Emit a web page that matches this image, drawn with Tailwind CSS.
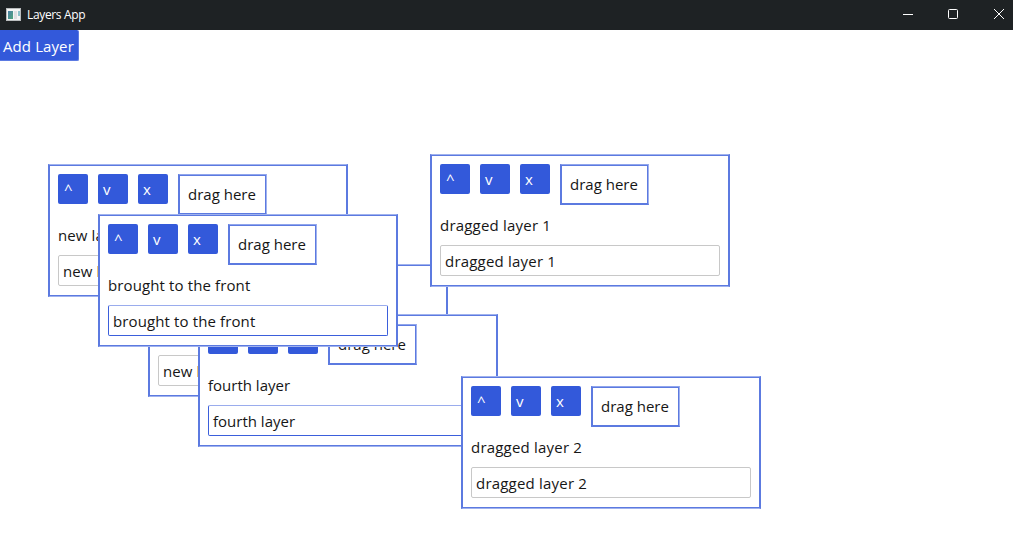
<!DOCTYPE html>
<html lang="en">
<head>
<meta charset="utf-8">
<title>Layers App</title>
<script src="https://cdn.jsdelivr.net/npm/@tailwindcss/browser@4"></script>
</head>
<body class="w-[1013px] h-[544px] overflow-hidden bg-white text-[#161616] font-['Open_Sans',sans-serif] flex flex-col">
<header class="h-[30px] shrink-0 bg-[#1e2224] flex items-center text-white">
  <svg class="ml-[6px] -mt-[2px]" width="15" height="13" viewBox="0 0 15 13">
    <defs><linearGradient id="g" x1="0" y1="0" x2="1" y2="1"><stop offset="0" stop-color="#4a7fa8"/><stop offset="1" stop-color="#4fa57a"/></linearGradient></defs>
    <rect width="15" height="13" fill="#b9bcbe"/>
    <rect x="1" y="1" width="13" height="11" fill="#f4f5f5"/>
    <rect x="2" y="3" width="5" height="8" fill="url(#g)"/>
    <rect x="8" y="3" width="3" height="8" fill="#dde0e2"/>
    <rect x="12" y="3" width="2" height="5" fill="#8dc3cb"/>
  </svg>
  <span class="ml-[6px] text-[12px] tracking-[-0.35px] leading-[30px]">Layers App</span>
  <div class="ml-auto flex items-center gap-[35px] mr-[8px] -mt-[2px]">
    <svg width="10" height="10" viewBox="0 0 10 10"><path d="M0 5.5H10" stroke="#fff"/></svg>
    <svg width="10" height="10" viewBox="0 0 10 10" fill="none" stroke="#fff"><rect x=".5" y=".5" width="9" height="9" rx="1"/></svg>
    <svg class="ml-px mr-px" width="10" height="10" viewBox="0 0 10 10" stroke="#fff"><path d="M0 0L10 10M10 0L0 10"/></svg>
  </div>
</header>
<main class="relative flex-1 text-[15px]">
  <button class="block w-[79px] h-[31px] pl-[3px] text-left bg-[#3359da] border-r border-b border-[#5b7ae2] rounded-r-[2px] text-white leading-[32px] tracking-[0.1px] whitespace-nowrap">Add Layer</button>
  <div id="layers"></div>
</main>
<script>
const layers = [
  { x: 48, y: 134, name: 'new layer' },
  { x: 148, y: 234, name: 'new layer' },
  { x: 198, y: 284, name: 'fourth layer', edited: true, track: 'tracking-[0px]' },
  { x: 98, y: 184, name: 'brought to the front', edited: true },
  { x: 430, y: 124, name: 'dragged layer 1', track: 'tracking-[0.2px]' },
  { x: 461, y: 346, name: 'dragged layer 2', track: 'tracking-[0.2px]' },
];
const button = (glyph, pad) => `<button class="w-[30px] h-[30px] rounded-[2px] bg-[#3359da] text-white text-left leading-[31px] ${pad}">${glyph}</button>`;
document.getElementById('layers').innerHTML = layers.map(l => `
  <section class="absolute w-[300px] h-[133px] bg-white border-x-2 border-y border-x-[#5c7ae0] border-y-[#a0b2ee] px-2 shadow-[inset_0_1px_#5c7ae0,inset_0_-1px_#5c7ae0] pt-[9px]" style="left:${l.x}px;top:${l.y}px">
    <div class="flex gap-[10px] h-[41px]">
      ${button('^', 'pl-[6px]')}${button('v', 'pl-[5px]')}${button('x', 'pl-[5px]')}
      <div class="w-[89px] h-[41px] border-2 border-[#5c7ae0] border-t border-r border-t-[#90a5ec] border-r-[#a0b2ee] shadow-[inset_-1px_1px_#5c7ae0] pl-2 leading-[38px] whitespace-nowrap">drag here</div>
    </div>
    <div class="mt-[9px] h-[22px] leading-[22px] ${l.track || 'tracking-[0.12px]'}">${l.name}</div>
    <div class="mt-[9px] h-[31px] rounded-[2px] border ${l.edited ? 'border-[#3b5fdb] border-t-[#9aaced]' : 'border-[#c8c8c8]'} pl-1 leading-[30px] ${l.track || 'tracking-[0.12px]'}">${l.name}</div>
  </section>`).join('');
</script>
</body>
</html>
